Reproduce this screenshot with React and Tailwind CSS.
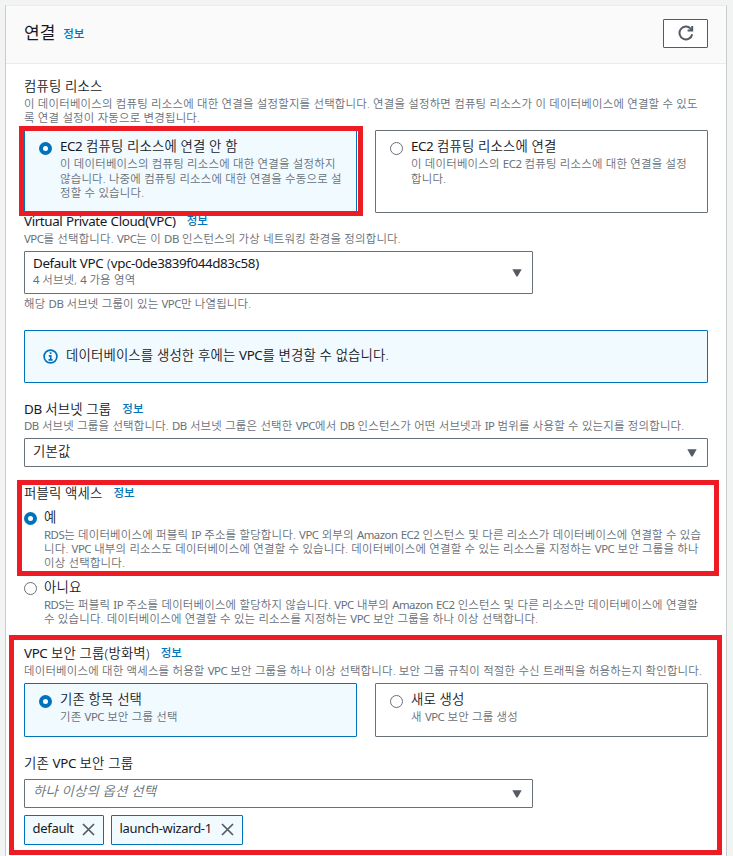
import clsx from 'clsx';

// Latin words are set tighter than the Hangul around them
const Mixed = ({ text, latin }) =>
  text.split(/([A-Za-z0-9][A-Za-z0-9()-]*)/).map((part, i) =>
    i % 2 ? (
      <span key={i} className={clsx('font-normal', latin)}>{part}</span>
    ) : (
      part
    )
  );

const InfoLink = ({ className }) => (
  <a href="#info" className={clsx('text-[11.5px] font-medium tracking-normal text-[#0073bb]', className)}>정보</a>
);

const Label = ({ children, info, className }) => (
  <div className={clsx('flex h-[18px] items-center text-[13.4px] leading-[18px] tracking-[0.15px] whitespace-nowrap', className)}>
    <span>
      <Mixed text={children} latin="tracking-[-0.4px]" />
    </span>
    {info && <InfoLink className="ml-[11px]" />}
  </div>
);

const Hint = ({ lines, className, leading = 'leading-[14px]' }) => (
  <div className={clsx('text-[11.4px] tracking-[0.21px] whitespace-nowrap text-[#687078]', leading, className)}>
    {lines.map((line) => (
      <p key={line}>
        <Mixed text={line} latin="tracking-[-0.5px]" />
      </p>
    ))}
  </div>
);

const Radio = ({ checked, className }) => (
  <span
    className={clsx(
      'box-border size-[13px] shrink-0 rounded-full bg-white',
      checked ? 'border-[4px] border-[#0073bb]' : 'border border-[#687078]',
      className
    )}
  />
);

const Tile = ({ title, lines, checked, className }) => (
  <div
    className={clsx(
      'flex w-[333px] rounded-[1px] border pt-[6px] pl-[14px]',
      checked ? 'border-[#0073bb] bg-[#f1faff]' : 'border-[#687078] bg-white',
      className
    )}
  >
    <Radio checked={checked} className="mt-[5px]" />
    <div className="ml-[8px]">
      <Label>{title}</Label>
      <Hint lines={lines} className="mt-[2px]" leading="leading-[14.6px]" />
    </div>
  </div>
);

const Caret = () => (
  <svg className="mr-[10px] h-[8px] w-[10px] shrink-0" viewBox="0 0 10 8">
    <path d="M0.3 0.3H9.7L5.6 7.4H4.4Z" fill="#545b64" />
  </svg>
);

const SelectBox = ({ children, className }) => (
  <div className={clsx('flex items-center justify-between rounded-[1px] border border-[#687078] bg-white pl-[8px]', className)}>
    <div className="-mt-[3px]">{children}</div>
    <Caret />
  </div>
);

const Token = ({ children, className }) => (
  <div className={clsx('flex h-[30px] items-center justify-between rounded-[1px] border border-[#0073bb] bg-[#f1faff] pr-[8px] pl-[7.5px] text-[13px] font-normal tracking-[-0.3px]', className)}>
    <span className="-mt-[3px] whitespace-nowrap">{children}</span>
    <svg className="-mt-[2px] size-[13px]" viewBox="0 0 13 13" stroke="#545b64" strokeWidth="1.7">
      <path d="M1 1L12 12M12 1L1 12" />
    </svg>
  </div>
);

// Red frame drawn over the form to point at a group of fields
const Highlight = ({ className }) => (
  <div className={clsx('pointer-events-none absolute border-[5px] border-[#ed1c24]', className)} />
);

const App = () => {
  return (
    <div className="relative h-[856px] w-[733px] overflow-hidden bg-[#f2f3f3] pt-[5px] pl-[5px] font-['Noto_Sans','Noto_Sans_CJK_KR',sans-serif] font-[350] text-[#16191f]">
      <div className="h-[860px] w-[722px] border border-t-[#eaeded] border-r-[#c8cccc] border-l-[#c8cccc] bg-white">
        <header className="flex h-[58px] items-center justify-between border-b border-[#eaeded] bg-[#fafafa] pr-[18px] pl-[18px]">
          <h2 className="-mt-[4px] flex items-center text-[17px] font-normal">
            연결
            <InfoLink className="mt-[2px] ml-[8px]" />
          </h2>
          <button className="-mt-[3px] flex h-[29px] w-[45px] items-center justify-center rounded-[1px] border border-[#545b64] bg-white">
            <svg className="size-[16px]" viewBox="0 0 16 16" fill="none" stroke="#545b64" strokeWidth="2">
              <path d="M14.2 9.2A6.4 6.4 0 1 1 12.6 3.6L14 5" />
              <path d="M14.2 1V5.5H9.6" />
            </svg>
          </button>
        </header>

        <div className="pt-[13px] pl-[18px]">
          <Label>컴퓨팅 리소스</Label>
          <Hint
            className="mt-[2px]"
            lines={[
              '이 데이터베이스의 컴퓨팅 리소스에 대한 연결을 설정할지를 선택합니다. 연결을 설정하면 컴퓨팅 리소스가 이 데이터베이스에 연결할 수 있도',
              '록 연결 설정이 자동으로 변경됩니다.',
            ]}
          />
          <div className="mt-[5px] flex gap-[18px]">
            <Tile
              checked
              className="h-[83px]"
              title="EC2 컴퓨팅 리소스에 연결 안 함"
              lines={[
                '이 데이터베이스의 컴퓨팅 리소스에 대한 연결을 설정하지',
                '않습니다. 나중에 컴퓨팅 리소스에 대한 연결을 수동으로 설',
                '정할 수 있습니다.',
              ]}
            />
            <Tile
              className="h-[83px]"
              title="EC2 컴퓨팅 리소스에 연결"
              lines={['이 데이터베이스의 EC2 컴퓨팅 리소스에 대한 연결을 설정', '합니다.']}
            />
          </div>

          <Label info className="-mt-px">Virtual Private Cloud(VPC)</Label>
          <Hint className="mt-[2px]" lines={['VPC를 선택합니다. VPC는 이 DB 인스턴스의 가상 네트워킹 환경을 정의합니다.']} />
          <SelectBox className="mt-[5px] h-[43px] w-[509px]">
            <Label className="-mt-px">Default VPC (vpc-0de3839f044d83c58)</Label>
            <Hint className="mt-px" lines={['4 서브넷, 4 가용 영역']} />
          </SelectBox>
          <Hint className="mt-[3px]" lines={['해당 DB 서브넷 그룹이 있는 VPC만 나열됩니다.']} />

          <div className="mt-[19px] flex h-[53px] w-[684px] items-center rounded-[1px] border border-[#0073bb] bg-[#f1faff] pl-[18px]">
            <svg className="size-[15px]" viewBox="0 0 15 15" fill="none" stroke="#0073bb" strokeWidth="1.7">
              <circle cx="7.5" cy="7.5" r="6.4" />
              <path d="M7.6 3.3V5M5.8 6.8H7.7V10.9M5.5 10.9H9.6" />
            </svg>
            <Label className="-mt-[3px] ml-[8px]">데이터베이스를 생성한 후에는 VPC를 변경할 수 없습니다.</Label>
          </div>

          <Label info className="mt-[17px]">DB 서브넷 그룹</Label>
          <Hint
            className="mt-[1px]"
            lines={['DB 서브넷 그룹을 선택합니다. DB 서브넷 그룹은 선택한 VPC에서 DB 인스턴스가 어떤 서브넷과 IP 범위를 사용할 수 있는지를 정의합니다.']}
          />
          <SelectBox className="mt-[5px] h-[29px] w-[684px]">
            <Label>기본값</Label>
          </SelectBox>

          <Label info className="mt-[17px]">퍼블릭 액세스</Label>
          <div className="mt-[6px] flex">
            <Radio checked className="mt-[4px]" />
            <div className="ml-[7px]">
              <Label>예</Label>
              <Hint
                className="mt-[2px]"
                lines={[
                  'RDS는 데이터베이스에 퍼블릭 IP 주소를 할당합니다. VPC 외부의 Amazon EC2 인스턴스 및 다른 리소스가 데이터베이스에 연결할 수 있습',
                  '니다. VPC 내부의 리소스도 데이터베이스에 연결할 수 있습니다. 데이터베이스에 연결할 수 있는 리소스를 지정하는 VPC 보안 그룹을 하나',
                  '이상 선택합니다.',
                ]}
              />
            </div>
          </div>
          <div className="mt-[8px] flex">
            <Radio className="mt-[4px]" />
            <div className="ml-[7px]">
              <Label>아니요</Label>
              <Hint
                className="mt-[2px]"
                lines={[
                  'RDS는 퍼블릭 IP 주소를 데이터베이스에 할당하지 않습니다. VPC 내부의 Amazon EC2 인스턴스 및 다른 리소스만 데이터베이스에 연결할',
                  '수 있습니다. 데이터베이스에 연결할 수 있는 리소스를 지정하는 VPC 보안 그룹을 하나 이상 선택합니다.',
                ]}
              />
            </div>
          </div>

          <Label info className="mt-[18px]">VPC 보안 그룹(방화벽)</Label>
          <Hint
            className="mt-[2px]"
            lines={['데이터베이스에 대한 액세스를 허용할 VPC 보안 그룹을 하나 이상 선택합니다. 보안 그룹 규칙이 적절한 수신 트래픽을 허용하는지 확인합니다.']}
          />
          <div className="mt-[5px] flex gap-[18px]">
            <Tile checked className="h-[54px]" title="기존 항목 선택" lines={['기존 VPC 보안 그룹 선택']} />
            <Tile className="h-[54px]" title="새로 생성" lines={['새 VPC 보안 그룹 생성']} />
          </div>

          <Label className="mt-[17px]">기존 VPC 보안 그룹</Label>
          <SelectBox className="mt-[7px] h-[29px] w-[509px]">
            <Label className="-mt-[2px] text-[#687078] italic">하나 이상의 옵션 선택</Label>
          </SelectBox>
          <div className="mt-[7px] flex gap-[7px]">
            <Token className="w-[80px]">default</Token>
            <Token className="w-[132px]">launch-wizard-1</Token>
          </div>
        </div>
      </div>

      <Highlight className="top-[126px] left-[19px] h-[90px] w-[344px]" />
      <Highlight className="top-[480px] left-[17px] h-[96px] w-[702px]" />
      <Highlight className="top-[635px] left-[9px] h-[220px] w-[713px]" />
    </div>
  );
};

export default App;
